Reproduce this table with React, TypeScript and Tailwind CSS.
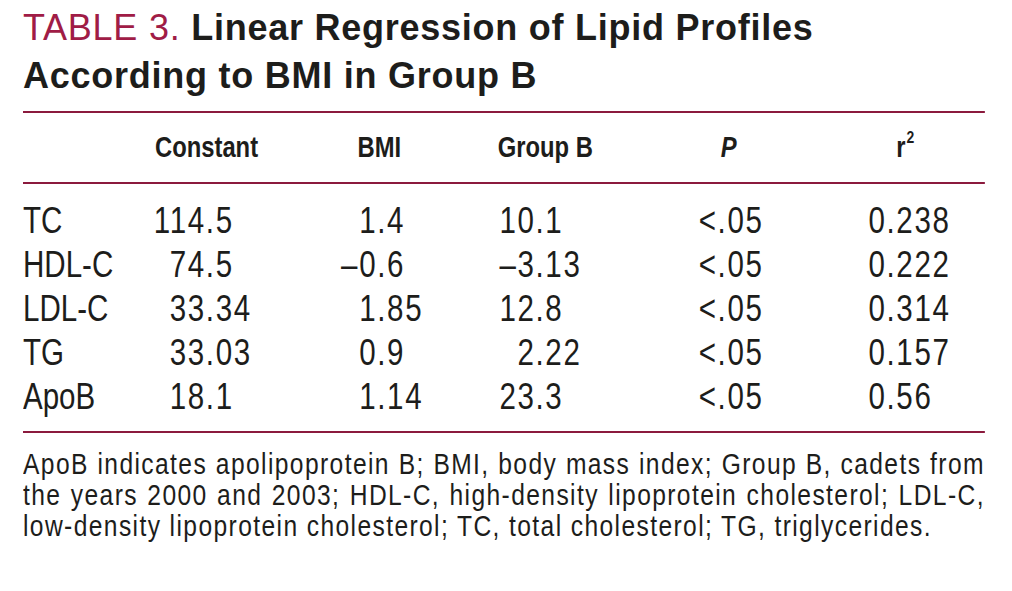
import React from 'react';

// Linear regression table, journal style.
// The table block is set in Liberation Sans squeezed to 82% (≈ a condensed Helvetica),
// so every horizontal size inside it is written in unscaled px.
interface Row {
  label: string;
  constant: [string, string];
  bmi: [string, string];
  groupB: [string, string];
  p: string;
  r2: string;
}

const rows: Row[] = [
  { label: 'TC', constant: ['114', '.5'], bmi: ['1', '.4'], groupB: ['10', '.1'], p: '<.05', r2: '0.238' },
  { label: 'HDL-C', constant: ['74', '.5'], bmi: ['–0', '.6'], groupB: ['–3', '.13'], p: '<.05', r2: '0.222' },
  { label: 'LDL-C', constant: ['33', '.34'], bmi: ['1', '.85'], groupB: ['12', '.8'], p: '<.05', r2: '0.314' },
  { label: 'TG', constant: ['33', '.03'], bmi: ['0', '.9'], groupB: ['2', '.22'], p: '<.05', r2: '0.157' },
  { label: 'ApoB', constant: ['18', '.1'], bmi: ['1', '.14'], groupB: ['23', '.3'], p: '<.05', r2: '0.56' },
];

const cols = 'grid grid-cols-[143px_232px_183px_244px_207px_1fr]';

const Num = ({ v, w }: { v: [string, string]; w: string }) => (
  <div className="flex tracking-[2px]">
    <span className={`${w} text-right`}>{v[0]}</span>
    <span>{v[1]}</span>
  </div>
);

export default function App() {
  return (
    <div className="w-[1012px] h-[591px] bg-white pl-[23px] pt-[4px] text-[#1d1d1b] overflow-hidden font-['Liberation_Sans',Arial,sans-serif]">
      <h1 className="text-[36px] leading-[48px] font-bold tracking-[0.75px]">
        <span className="font-normal text-[#a01c46]">TABLE 3.</span> Linear Regression of Lipid Profiles
        <br />
        According to BMI in Group B
      </h1>

      <div className="w-[1173px] origin-left scale-x-[0.82]">
        <div className="mt-[11px] h-[2px] bg-[#8b1a3d]" />

        {/* header */}
        <div className={`${cols} h-[69px] items-center text-[29px] font-bold`}>
          <div />
          <div className="pl-[18px]">Constant</div>
          <div className="pl-[33px]">BMI</div>
          <div className="pl-[21px]">Group B</div>
          <div className="pl-[49px] italic">P</div>
          <div className="pl-[56px]">
            r<sup className="text-[17px] top-[-0.8em] ml-[1px]">2</sup>
          </div>
        </div>

        <div className="h-[2px] bg-[#8b1a3d]" />

        {/* body */}
        <div className="pt-[15px] text-[36px] leading-[44px]">
          {rows.map((r) => (
            <div key={r.label} className={cols}>
              <div>{r.label}</div>
              <Num v={r.constant} w="w-[80px]" />
              <Num v={r.bmi} w="w-[57px]" />
              <Num v={r.groupB} w="w-[67px]" />
              <div className="pl-[22px] tracking-[2px]">{r.p}</div>
              <div className="pl-[22px] tracking-[2px]">{r.r2}</div>
            </div>
          ))}
        </div>

        <div className="mt-[12px] h-[2px] bg-[#8b1a3d]" />

        {/* footnote */}
        <div className="mt-[15px] text-[30px] leading-[31px] tracking-[1.7px]">
          <div className="text-justify [text-align-last:justify]">
            ApoB indicates apolipoprotein B; BMI, body mass index; Group B, cadets from
          </div>
          <div className="text-justify [text-align-last:justify]">
            the years 2000 and 2003; HDL-C, high-density lipoprotein cholesterol; LDL-C,
          </div>
          <div className="whitespace-nowrap">
            low-density lipoprotein cholesterol; TC, total cholesterol; TG, triglycerides.
          </div>
        </div>
      </div>
    </div>
  );
}
